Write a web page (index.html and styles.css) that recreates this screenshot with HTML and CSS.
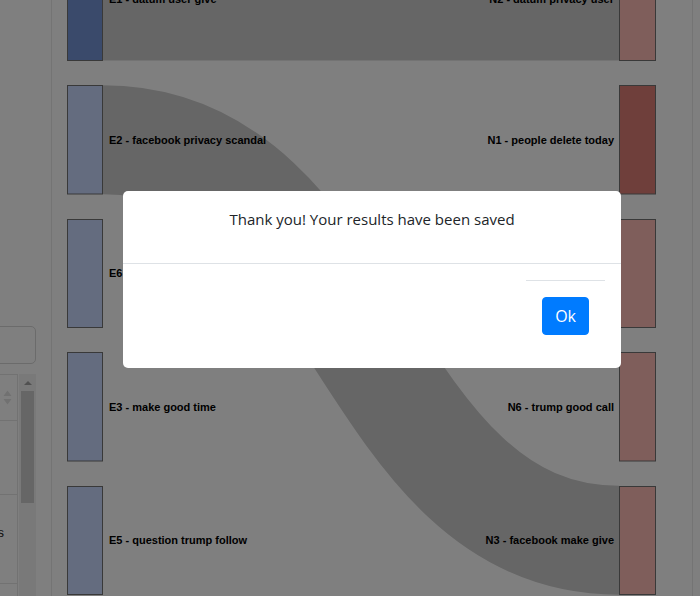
FILE: index.html
```html
<!DOCTYPE html>
<html lang="en">
<head>
<meta charset="utf-8">
<title>Sankey results</title>
<link rel="stylesheet" href="styles.css">
</head>
<body>
<div class="app">
  <aside class="sidebar">
    <div class="search"></div>
    <div class="list">
      <div class="table">
        <div class="row head">
          <svg class="sort" width="9" height="15" viewBox="0 0 9 15"><path d="M4.5 0.5 L8.5 6 L0.5 6 Z M0.5 9 L8.5 9 L4.5 14.5 Z"/></svg>
        </div>
        <div class="row r2"></div>
        <div class="row r3"><span class="cell-text">Topics</span></div>
        <div class="row r4"></div>
      </div>
      <div class="scrollbar">
        <div class="sb-btn"><span class="sb-arrow"></span></div>
        <div class="sb-thumb"></div>
      </div>
    </div>
  </aside>
  <main class="chart">
    <svg class="sankey" width="640" height="596" viewBox="52 0 640 596">
      <g class="links">
        <path class="link" d="M103,-1 C361,-1 361,-1 619,-1" stroke-width="123"/>
        <path class="link" d="M103,139.75 C361,139.75 361,540.25 619,540.25" stroke-width="109"/>
      </g>
      <g class="nodes">
        <rect class="node e1" x="67.5" y="-62.5" width="35" height="123"/>
        <rect class="node e" x="67.5" y="85.5" width="35" height="108.5"/>
        <rect class="node e" x="67.5" y="219.5" width="35" height="108"/>
        <rect class="node e" x="67.5" y="352.5" width="35" height="108.5"/>
        <rect class="node e" x="67.5" y="486.5" width="35" height="108"/>
        <rect class="node n" x="619.5" y="-62.5" width="36" height="123"/>
        <rect class="node n1" x="619.5" y="85.5" width="36" height="108.5"/>
        <rect class="node n" x="619.5" y="219.5" width="36" height="108"/>
        <rect class="node n" x="619.5" y="352.5" width="36" height="108.5"/>
        <rect class="node n" x="619.5" y="486.5" width="36" height="108"/>
      </g>
      <g class="labels">
        <text x="109" y="-1" dy=".35em">E1 - datum user give</text>
        <text x="109" y="139.75" dy=".35em">E2 - facebook privacy scandal</text>
        <text x="109" y="273.5" dy=".35em">E6 - people user time</text>
        <text x="109" y="407" dy=".35em">E3 - make good time</text>
        <text x="109" y="540.5" dy=".35em">E5 - question trump follow</text>
        <text class="end" x="614" y="-1" dy=".35em">N2 - datum privacy user</text>
        <text class="end" x="614" y="139.75" dy=".35em">N1 - people delete today</text>
        <text class="end" x="614" y="273.5" dy=".35em">N4 - user give call</text>
        <text class="end" x="614" y="407" dy=".35em">N6 - trump good call</text>
        <text class="end" x="614" y="540.5" dy=".35em">N3 - facebook make give</text>
      </g>
    </svg>
  </main>
  <div class="rightbar"></div>
</div>

<div class="backdrop"></div>
<div class="modal" role="dialog">
  <div class="modal-header">
    <h5 class="modal-title">Thank you! Your results have been saved</h5>
  </div>
  <div class="modal-footer">
    <div class="footer-inner">
      <button class="btn-ok" type="button">Ok</button>
    </div>
  </div>
</div>
</body>
</html>
```

FILE: styles.css
```css
* { box-sizing: border-box; }
html, body { margin: 0; padding: 0; }
body {
  width: 700px;
  height: 596px;
  overflow: hidden;
  background: #fff;
  font-family: "Open Sans", "Noto Sans", sans-serif;
  color: #212529;
}

.app { display: flex; height: 596px; }

/* sidebar */
.sidebar {
  width: 52px;
  flex: none;
  border-right: 1px solid #e8e8e8;
  overflow: hidden;
  display: flex;
  flex-direction: column;
  padding-top: 326px;
}
.search {
  flex: none;
  height: 38px;
  margin-left: -200px;
  margin-right: 15px;
  border: 1px solid #d6d6d6;
  border-radius: 5px;
}
.list { display: flex; flex: 1; margin-top: 10px; }
.table {
  flex: none;
  width: 118px;
  margin-left: -100px;
  border-top: 1px solid #e4e4e4;
  border-right: 1px solid #e4e4e4;
}
.row { border-bottom: 1px solid #e4e4e4; display: flex; justify-content: flex-end; align-items: center; }
.row.head { height: 46px; padding-right: 5px; }
.row.r2 { height: 74px; }
.row.r3 { height: 89px; padding-right: 13px; align-items: flex-start; padding-top: 30px; }
.row.r4 { height: 40px; }
.sort { fill: #e2e2e2; display: block; }
.cell-text { font-family: "Liberation Sans", Arial, sans-serif; font-size: 13px; color: #222; }

.scrollbar {
  flex: none;
  width: 17px;
  margin-left: 1px;
  background: #f2f2f2;
  display: flex;
  flex-direction: column;
  align-items: center;
}
.sb-btn { height: 17px; width: 17px; display: flex; justify-content: center; align-items: center; }
.sb-arrow {
  width: 0; height: 0;
  border-left: 4px solid transparent;
  border-right: 4px solid transparent;
  border-bottom: 4px solid #a3a3a3;
}
.sb-thumb { width: 13px; height: 112px; background: #cdcdcd; }

/* chart */
.chart { width: 640px; flex: none; }
.sankey { display: block; }
.link { fill: none; stroke: #000; stroke-opacity: 0.2; }
.node { stroke: #727272; stroke-width: 1; }
.node.e { fill: #c8d8ff; }
.node.e1 { fill: #7494d6; }
.node.n { fill: #febcb6; }
.node.n1 { fill: #de7e76; }
.labels text {
  font-family: "Liberation Sans", Arial, sans-serif;
  font-size: 11px;
  font-weight: bold;
  fill: #000;
}
.labels text.end { text-anchor: end; }

.rightbar { flex: 1; border-left: 1px solid #e8e8e8; }

/* modal */
.backdrop {
  position: fixed;
  inset: 0;
  background: rgba(0, 0, 0, 0.5);
}
.modal {
  position: fixed;
  left: 123px;
  top: 191px;
  width: 498px;
  background: #fff;
  border-radius: 5px;
}
.modal-header {
  padding: 16px 16px 32px;
  border-bottom: 1px solid #dee2e6;
}
.modal-title {
  margin: 0;
  font-size: 15px;
  font-weight: 400;
  line-height: 24px;
  text-align: center;
  color: #212529;
}
.modal-footer {
  display: flex;
  justify-content: flex-end;
  padding: 16px 16px 17px;
}
.footer-inner {
  border-top: 1px solid #dee2e6;
  padding: 16px;
}
.btn-ok {
  display: block;
  font-family: inherit;
  font-size: 16px;
  line-height: 24px;
  padding: 6px 12px;
  color: #fff;
  background: #007bff;
  border: 1px solid #007bff;
  border-radius: 4px;
}
```
